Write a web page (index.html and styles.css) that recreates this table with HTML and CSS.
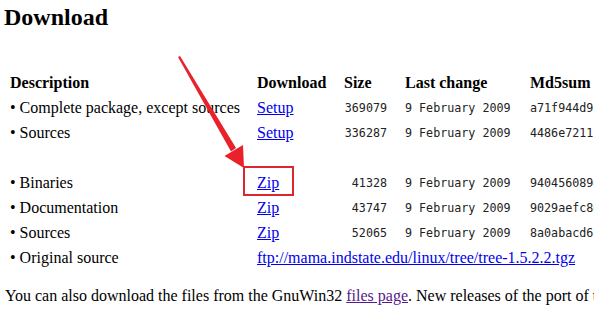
FILE: index.html
```html
<!DOCTYPE html>
<html lang="en">
<head>
  <meta charset="UTF-8">
  <title>Tree for Windows</title>
  <link rel="stylesheet" href="styles.css">
</head>
<body>
  <div class="page">
    <h2>Download</h2>

    <table class="downloads">
      <tr>
        <th class="c-desc">Description</th>
        <th class="c-link">Download</th>
        <th class="c-size">Size</th>
        <th class="c-date">Last change</th>
        <th class="c-md5">Md5sum</th>
      </tr>
      <tr>
        <td class="c-desc">&bull; Complete package, except sources</td>
        <td class="c-link"><a href="#">Setup</a></td>
        <td class="c-size num">369079</td>
        <td class="c-date mono">9 February 2009</td>
        <td class="c-md5 mono">a71f944d9c1e0b5a27d3f6e84c0b9a12</td>
      </tr>
      <tr>
        <td class="c-desc">&bull; Sources</td>
        <td class="c-link"><a href="#">Setup</a></td>
        <td class="c-size num">336287</td>
        <td class="c-date mono">9 February 2009</td>
        <td class="c-md5 mono">4486e7211b03c9f52ad8e17640fa3c9d</td>
      </tr>
      <tr class="spacer"><td colspan="5"></td></tr>
      <tr>
        <td class="c-desc">&bull; Binaries</td>
        <td class="c-link"><a href="#">Zip</a></td>
        <td class="c-size num">41328</td>
        <td class="c-date mono">9 February 2009</td>
        <td class="c-md5 mono">940456089e2f7a1bc35d08e4f61a7c2b</td>
      </tr>
      <tr>
        <td class="c-desc">&bull; Documentation</td>
        <td class="c-link"><a href="#">Zip</a></td>
        <td class="c-size num">43747</td>
        <td class="c-date mono">9 February 2009</td>
        <td class="c-md5 mono">9029aefc8d41b6e073f2c58a9e1d40b7</td>
      </tr>
      <tr>
        <td class="c-desc">&bull; Sources</td>
        <td class="c-link"><a href="#">Zip</a></td>
        <td class="c-size num">52065</td>
        <td class="c-date mono">9 February 2009</td>
        <td class="c-md5 mono">8a0abacd6f3e21c9b74d05a8e6c1f293</td>
      </tr>
      <tr>
        <td class="c-desc">&bull; Original source</td>
        <td class="c-link" colspan="4"><a href="#">ftp://mama.indstate.edu/linux/tree/tree-1.5.2.2.tgz</a></td>
      </tr>
    </table>

    <p class="note">You can also download the files from the GnuWin32 <a class="visited" href="#">files page</a>. New releases of the port of tree will be announced there.</p>
  </div>

  <!-- annotation: arrow pointing at the binaries zip -->
  <svg class="marks" width="594" height="310" viewBox="0 0 594 310">
    <rect x="244" y="167" width="49" height="28" fill="none" stroke="#d9262f" stroke-width="2"/>
    <polygon fill="#e8212b" points="178,57 180,56 236,148 231,151.5"/>
    <polygon fill="#e8212b" points="244,168 243,145 224.5,156"/>
  </svg>
</body>
</html>
```

FILE: styles.css
```css
html, body {
  overflow: hidden;
}

body {
  margin: 0;
  background: #fff;
  color: #000;
  font-family: "Liberation Serif", "Times New Roman", serif;
  font-size: 16px;
  position: relative;
}

.page {
  width: 900px;
  padding: 3px 0 0 5px;
}

h2 {
  margin: 0 0 0 -1px;
  font-size: 24px;
  font-weight: bold;
  line-height: 28px;
}

a {
  color: #0000ee;
}

a.visited {
  color: #551a8b;
}

.downloads {
  margin-top: 39px;
  border-collapse: collapse;
}

.downloads th,
.downloads td {
  height: 25px;
  padding: 0;
  text-align: left;
  white-space: nowrap;
  vertical-align: middle;
}

.downloads th {
  font-weight: bold;
}

.c-desc {
  width: 247px;
  padding-left: 5px !important;
}

.c-link {
  width: 87px;
}

.c-size {
  width: 43px;
  padding-right: 18px !important;
}

.c-date {
  width: 125px;
}

.mono,
.num {
  font-family: "DejaVu Sans Mono", "Liberation Mono", monospace;
  font-size: 11.7px;
  color: #222;
}

.downloads td.num {
  text-align: right;
}

.downloads .spacer td {
  height: 25px;
}

.note {
  margin: 17px 0 0;
  white-space: nowrap;
}

.marks {
  position: absolute;
  left: 0;
  top: 0;
  pointer-events: none;
}
```
